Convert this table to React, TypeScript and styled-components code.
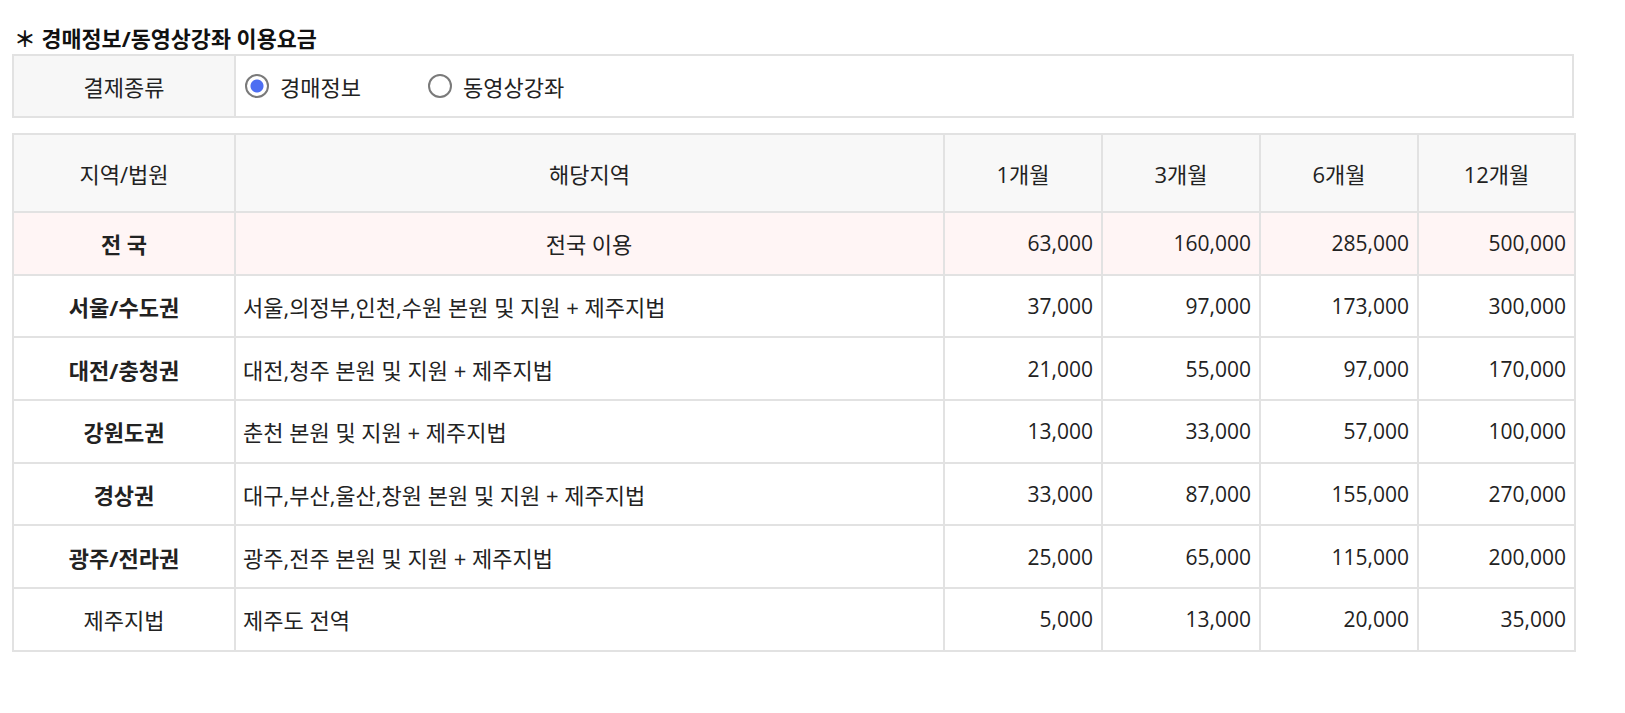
import React, { useState } from "react";
import styled, { createGlobalStyle } from "styled-components";

const Global = createGlobalStyle`
  html, body { margin: 0; padding: 0; background: #ffffff; }
  body {
    font-family: "Open Sans", "Noto Sans CJK KR", sans-serif;
    color: #222222;
  }
`;

const Page = styled.div`
  width: 1562px;
  padding: 25px 0 0 12px;
`;

const Title = styled.h2`
  margin: 0 0 2px;
  padding-left: 2px;
  font-size: 21.8px;
  line-height: 27px;
  font-weight: 700;
  color: #111111;
`;

const Table = styled.table<{ $gap?: number }>`
  width: 100%;
  border-collapse: collapse;
  table-layout: fixed;
  margin-top: ${(p) => p.$gap ?? 0}px;
  border: 2px solid #e2e2e2;
  font-size: 22px;
`;

const Cell = styled.td`
  border: 2px solid #e2e2e2;
  padding: 0 8px;
  vertical-align: middle;
`;

const LabelCell = styled(Cell)`
  background: #f7f7f7;
  text-align: center;
  height: 60px;
`;

const HeadCell = styled.th`
  border: 2px solid #e2e2e2;
  background: #f8f8f8;
  font-weight: 400;
  text-align: center;
  height: 76px;
  padding: 0 8px;
`;

const Row = styled.tr<{ $pink?: boolean }>`
  background: ${(p) => (p.$pink ? "#fff5f5" : "#ffffff")};
`;

const NameCell = styled(Cell)<{ $bold?: boolean }>`
  text-align: center;
  font-weight: ${(p) => (p.$bold ? 700 : 400)};
  height: 60.7px;
`;

const AreaCell = styled(Cell)<{ $center?: boolean }>`
  text-align: ${(p) => (p.$center ? "center" : "left")};
  padding-left: 7px;
`;

const PriceCell = styled(Cell)`
  text-align: right;
  font-size: 21px;
  padding-right: 8px;
`;

const Options = styled.div`
  display: flex;
  align-items: center;
  gap: 67px;
  padding-left: 1px;
`;

const Option = styled.label`
  display: inline-flex;
  align-items: center;
  gap: 11px;
  cursor: pointer;
`;

const Radio = styled.input.attrs({ type: "radio" })`
  appearance: none;
  margin: 0;
  width: 24px;
  height: 24px;
  box-sizing: border-box;
  border-radius: 50%;
  border: 2px solid #7a7a7a;
  background: #ffffff;
  cursor: pointer;
  &:checked {
    background: radial-gradient(circle, #4d6ef2 0 6px, #ffffff 7px);
  }
`;

type Region = {
  name: string;
  bold: boolean;
  area: string;
  center?: boolean;
  pink?: boolean;
  prices: string[];
};

const regions: Region[] = [
  { name: "전 국", bold: true, area: "전국 이용", center: true, pink: true, prices: ["63,000", "160,000", "285,000", "500,000"] },
  { name: "서울/수도권", bold: true, area: "서울,의정부,인천,수원 본원 및 지원 + 제주지법", prices: ["37,000", "97,000", "173,000", "300,000"] },
  { name: "대전/충청권", bold: true, area: "대전,청주 본원 및 지원 + 제주지법", prices: ["21,000", "55,000", "97,000", "170,000"] },
  { name: "강원도권", bold: true, area: "춘천 본원 및 지원 + 제주지법", prices: ["13,000", "33,000", "57,000", "100,000"] },
  { name: "경상권", bold: true, area: "대구,부산,울산,창원 본원 및 지원 + 제주지법", prices: ["33,000", "87,000", "155,000", "270,000"] },
  { name: "광주/전라권", bold: true, area: "광주,전주 본원 및 지원 + 제주지법", prices: ["25,000", "65,000", "115,000", "200,000"] },
  { name: "제주지법", bold: false, area: "제주도 전역", prices: ["5,000", "13,000", "20,000", "35,000"] },
];

const periods = ["1개월", "3개월", "6개월", "12개월"];

export default function App() {
  const [kind, setKind] = useState("auction");
  return (
    <Page>
      <Global />
      <Title>＊ 경매정보/동영상강좌 이용요금</Title>
      <Table>
        <colgroup>
          <col style={{ width: 222 }} />
          <col />
        </colgroup>
        <tbody>
          <tr>
            <LabelCell>결제종류</LabelCell>
            <Cell>
              <Options>
                <Option>
                  <Radio name="kind" checked={kind === "auction"} onChange={() => setKind("auction")} />
                  경매정보
                </Option>
                <Option>
                  <Radio name="kind" checked={kind === "video"} onChange={() => setKind("video")} />
                  동영상강좌
                </Option>
              </Options>
            </Cell>
          </tr>
        </tbody>
      </Table>
      <Table $gap={15}>
        <colgroup>
          <col style={{ width: 222 }} />
          <col style={{ width: 709 }} />
          <col style={{ width: 158 }} />
          <col style={{ width: 158 }} />
          <col style={{ width: 158 }} />
          <col style={{ width: 157 }} />
        </colgroup>
        <thead>
          <tr>
            <HeadCell>지역/법원</HeadCell>
            <HeadCell>해당지역</HeadCell>
            {periods.map((p) => (
              <HeadCell key={p}>{p}</HeadCell>
            ))}
          </tr>
        </thead>
        <tbody>
          {regions.map((r) => (
            <Row key={r.name} $pink={r.pink}>
              <NameCell $bold={r.bold}>{r.name}</NameCell>
              <AreaCell $center={r.center}>{r.area}</AreaCell>
              {r.prices.map((v, i) => (
                <PriceCell key={i}>{v}</PriceCell>
              ))}
            </Row>
          ))}
        </tbody>
      </Table>
    </Page>
  );
}
